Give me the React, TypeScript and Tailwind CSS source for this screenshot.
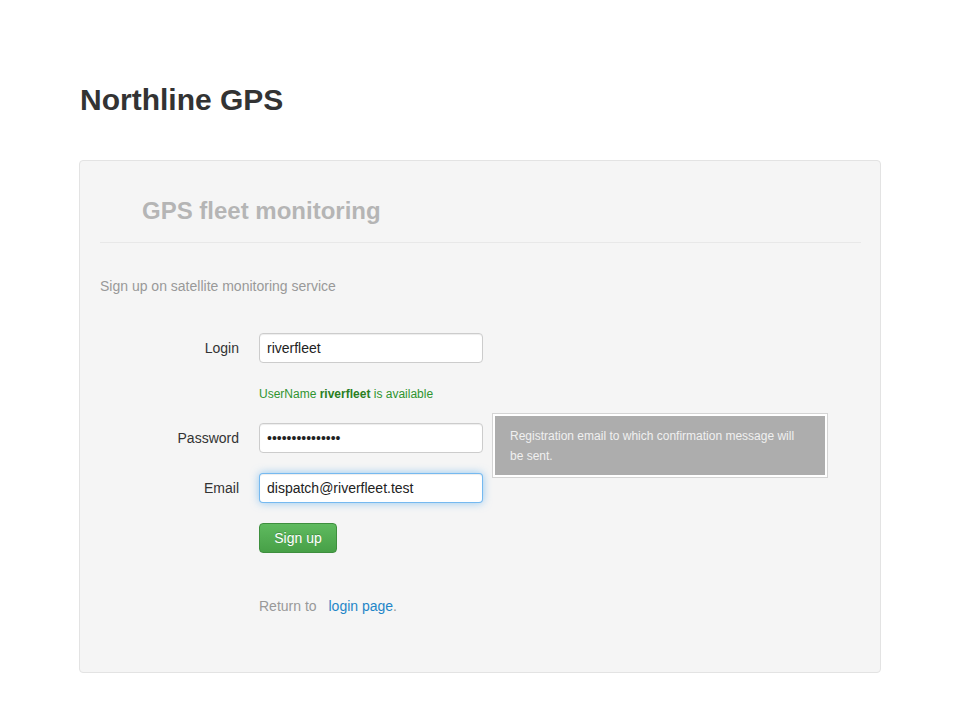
import React from 'react';

const font = { fontFamily: '"Liberation Sans", Arial, sans-serif' };

const inputBase =
  'h-[30px] w-[224px] rounded-[4px] border bg-white px-[7px] text-[14px] text-[#222] outline-none';

export default function App() {
  return (
    <div className="min-h-screen bg-white pt-[80px]" style={font}>
      {/* Page title */}
      <h1 className="ml-[80px] text-[30px] font-bold leading-[40px] text-[#333]">Northline GPS</h1>

      {/* Well */}
      <div className="ml-[79px] mt-[40px] w-[802px] rounded-[4px] border border-[#e3e3e3] bg-[#f5f5f5] p-[19px]">
        <div className="ml-[1px] border-b border-[#e8e8e8] px-[42px] pb-[11px] pt-[11px]">
          <h2 className="text-[24px] font-bold leading-[40px] text-[#b5b5b5]">GPS fleet monitoring</h2>
        </div>

        <p className="ml-[1px] mt-[33px] text-[14px] leading-[20px] text-[#999]">Sign up on satellite monitoring service</p>

        {/* Form */}
        <div className="relative mt-[37px]">
          <div className="flex items-center">
            <label className="w-[140px] text-right text-[14px] text-[#333]">Login</label>
            <input className={`${inputBase} ml-[20px] border-[#ccc] shadow-[inset_0_1px_1px_rgba(0,0,0,0.075)]`} defaultValue="riverfleet" />
          </div>
          <p className="ml-[160px] mt-[21px] text-[12px] leading-[20px] text-[#2f942f]">
            UserName <b className="text-[#2a7f1f]">riverfleet</b> is available
          </p>

          <div className="mt-[19px] flex items-center">
            <label className="w-[140px] text-right text-[14px] text-[#333]">Password</label>
            <input
              type="password"
              className={`${inputBase} ml-[20px] border-[#ccc] shadow-[inset_0_1px_1px_rgba(0,0,0,0.075)]`}
              defaultValue="riverfleet12345"
            />
          </div>

          <div className="mt-[20px] flex items-center">
            <label className="w-[140px] text-right text-[14px] text-[#333]">Email</label>
            <input
              className={`${inputBase} ml-[20px] border-[rgba(82,168,236,0.8)] shadow-[inset_0_1px_1px_rgba(0,0,0,0.075),0_0_8px_rgba(82,168,236,0.6)]`}
              defaultValue="dispatch@riverfleet.test"
            />
          </div>

          <div className="ml-[160px] mt-[20px]">
            <button className="h-[30px] w-[78px] rounded-[4px] border border-[#3e8f3e] bg-gradient-to-b from-[#5fba5f] to-[#47a047] text-[14px] text-white [text-shadow:0_-1px_0_rgba(0,0,0,0.2)]">
              Sign up
            </button>
          </div>

          <p className="ml-[160px] mt-[43px] text-[14px] leading-[20px] text-[#999]">
            Return to <span className="ml-[8px] text-[#1f86c8]">login page</span>.
          </p>

          {/* Help popover */}
          <div className="absolute left-[393px] top-[80px] w-[336px] border border-[#d4d4d4] bg-white p-[2px]">
            <div className="bg-[#adadad] pb-[9px] pl-[15px] pr-[15px] pt-[10px] text-[12px] leading-[20px] text-[#f0f0f0]">
              Registration email to which confirmation message will
              <br />
              be sent.
            </div>
          </div>
        </div>

        <div className="h-[37px]" />
      </div>
    </div>
  );
}
